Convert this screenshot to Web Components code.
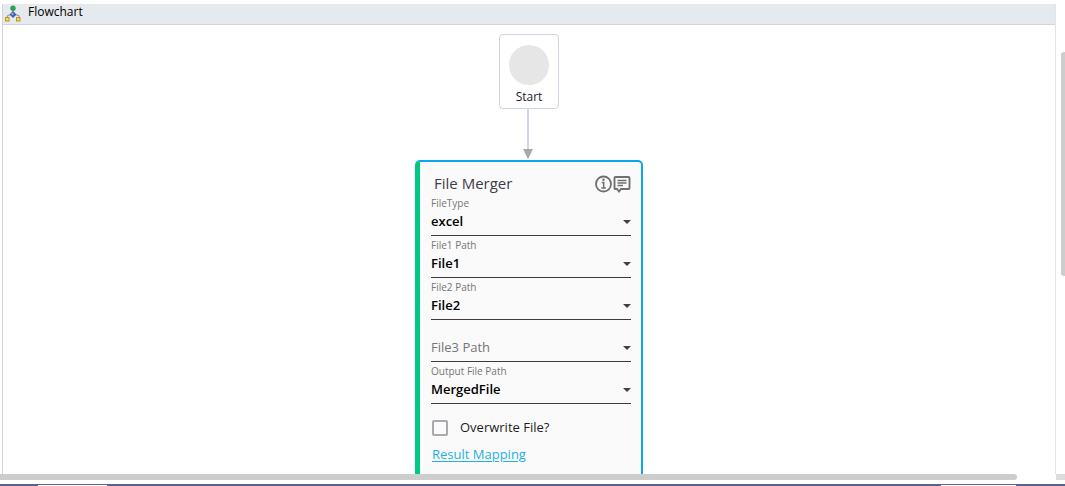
<!DOCTYPE html>
<html lang="en">
<head>
<meta charset="utf-8">
<title>Flowchart</title>
<style>
  html, body { margin: 0; height: 100%; background: #fff; overflow: hidden; }
  body { font-family: "Open Sans", "Noto Sans", sans-serif; color: #1e1e1e; }
</style>
</head>
<body>
<designer-shell>
  <flow-panel heading="Flowchart">
    <start-node>Start</start-node>
    <flow-arrow></flow-arrow>
    <activity-card heading="File Merger">
      <select-field label="FileType" value="excel"></select-field>
      <select-field label="File1 Path" value="File1"></select-field>
      <select-field label="File2 Path" value="File2"></select-field>
      <select-field label="File3 Path"></select-field>
      <select-field label="Output File Path" value="MergedFile"></select-field>
      <check-field>Overwrite File?</check-field>
      <text-link>Result Mapping</text-link>
    </activity-card>
  </flow-panel>
</designer-shell>
<script>
  function define(name, render) {
    customElements.define(name, class extends HTMLElement {
      constructor() {
        super();
        this.attachShadow({ mode: "open" });
      }
      connectedCallback() {
        this.shadowRoot.innerHTML = render(this);
      }
    });
  }

  define("designer-shell", () => `
    <style>
      :host { display: flex; flex-direction: column; height: 100vh; box-sizing: border-box; padding-top: 4px; }
      .work { flex: 1; min-height: 0; display: grid; grid-template-columns: minmax(0, 1fr) 9px; }
      .gutter { display: grid; grid-template-rows: 48fr 224fr 198fr; padding-left: 5px; }
      .gutter i { grid-row: 2; background: #cdcdcd; border-radius: 3px 0 0 3px; }
      .bar { height: 6px; display: grid; grid-template-columns: 1017fr 39fr 9px; }
      .bar .thumb { background: #cdcdcd; border-radius: 0 3px 3px 0; }
      .bar .corner { grid-column: 3; background: #dcdcdc; }
      .strip { height: 2px; margin-top: 4px; background: #55658f; display: grid; grid-template-columns: 38fr 69fr 834fr 75fr 49fr; }
      .strip i { grid-column: 2; grid-row: 1; margin-top: 1px; background: #fff; }
      .strip i + i { grid-column: 4; }
    </style>
    <div class="work"><slot></slot><div class="gutter"><i></i></div></div>
    <div class="bar"><div class="thumb"></div><div class="corner"></div></div>
    <div class="strip"><i></i><i></i></div>`);

  define("flow-panel", el => `
    <style>
      :host { display: flex; flex-direction: column; min-height: 0; overflow: hidden; margin-left: 2px; border-left: 1px solid #ced4e3; border-right: 1px solid #dfe5ec; }
      header { display: flex; align-items: flex-start; gap: 6px; height: 20px; padding-left: 2px; background: #e7eaed; border-bottom: 1px solid #ced4e3; }
      h1 { margin: 0; font-size: 12px; line-height: 16px; font-weight: 400; color: #000; }
      svg { width: 17px; height: 17px; margin-top: 1px; }
      main { flex: 1; min-height: 0; overflow: hidden; display: flex; flex-direction: column; align-items: center; padding-top: 9px; }
    </style>
    <header>
      <svg viewBox="0 0 17 17" aria-hidden="true">
        <path d="M8 4v5M2.500 13v-2.500L7 9.500h2l5 1V13" fill="none" stroke="#8494a9"/>
        <circle cx="8" cy="3.300" r="2.700" fill="#2f9e52"/>
        <path d="M8 6l3.500 3.500L8 13 4.500 9.500z" fill="#405f9d"/>
        <circle cx="7.500" cy="9" r="1.200" fill="#8aa9df"/>
        <rect x=".5" y="12.500" width="3.500" height="3.500" fill="#f7d86c" stroke="#bd9324"/>
        <rect x="11.500" y="12.500" width="3.500" height="3.500" fill="#f7d86c" stroke="#bd9324"/>
      </svg>
      <h1>${el.getAttribute("heading")}</h1>
    </header>
    <main><slot></slot></main>`);

  define("start-node", () => `
    <style>
      :host { flex: none; display: flex; flex-direction: column; align-items: center; box-sizing: border-box; width: 60px; height: 75px; padding-top: 10px; gap: 4px; border: 1px solid #ced4e3; border-radius: 4px; background: #fff; font-size: 12px; line-height: 16px; color: #1b1b2d; }
      i { width: 40px; height: 40px; border-radius: 50%; background: #e6e6e6; }
    </style>
    <i></i><span><slot></slot></span>`);

  define("flow-arrow", () => `
    <style>
      :host { flex: none; display: block; height: 51px; width: 12px; margin-right: 2px; }
      svg { display: block; }
    </style>
    <svg width="12" height="51" viewBox="0 0 12 51" aria-hidden="true">
      <path d="M6 0v41" stroke="#ced4e3" stroke-width="2"/>
      <path d="M1 40h10L6 50z" fill="#a9a9a9"/>
    </svg>`);

  define("activity-card", el => `
    <style>
      :host { flex: none; display: block; box-sizing: border-box; width: 228px; padding: 12px 10px 16px 11px; background: #fafafa; border: solid #0ba7ec; border-width: 2px 2px 2px 5px; border-left-color: #00c986; border-radius: 5px; }
      header { display: flex; align-items: center; height: 20px; padding-left: 3px; }
      h2 { flex: 1; margin: 0; padding-bottom: 2px; font-size: 15px; line-height: 20px; font-weight: 400; color: #3d3d46; }
      button { display: block; padding: 0; border: 0; background: none; height: 18px; }
      svg { display: block; }
    </style>
    <header>
      <h2>${el.getAttribute("heading")}</h2>
      <button type="button" aria-label="Information">
        <svg width="18" height="18" viewBox="0 0 18 18" fill="none" stroke="#707070">
          <circle cx="8.500" cy="9" r="7.500" stroke-width="1.800"/>
          <path d="M6.700 7.500h2v5M6.300 13h4.600" stroke-width="1.500"/>
          <circle cx="8.500" cy="4.800" r="1.200" fill="#707070" stroke="none"/>
        </svg>
      </button>
      <button type="button" aria-label="Comment">
        <svg width="18" height="18" viewBox="0 0 18 18" fill="none" stroke="#707070">
          <path d="M2.500 2h13q1 0 1 1v10q0 1-1 1H8l-2 2.500L4 14H2.500q-1 0-1-1V3q0-1 1-1z" stroke-width="1.900"/>
          <path d="M4.500 5.500h9M4.500 8h9M4.500 10.500h5.500" stroke-width="1.400"/>
        </svg>
      </button>
    </header>
    <slot></slot>`);

  define("select-field", el => {
    const label = el.getAttribute("label");
    const value = el.getAttribute("value");
    return `
    <style>
      :host { display: block; }
      .field { display: grid; grid-template: 16px 25px / 1fr 8px; border-bottom: 1px solid #3c3c3c; }
      label { grid-area: 1 / 1 / 2 / 3; font-size: 10px; line-height: 16px; color: #767676; padding-top: 1px; }
      select { grid-area: 2 / 1 / 3 / 3; appearance: none; border: 0; border-radius: 0; margin: 0; padding: 0 12px 4px 0; background: none; font: 600 13px/20px "Open Sans", "Noto Sans", sans-serif; color: #000; outline: 0; }
      select.empty { color: #767676; font-weight: 400; }
      svg { grid-area: 2 / 2; margin-top: 10px; pointer-events: none; }
    </style>
    <div class="field">
      ${value ? `<label for="s">${label}</label>` : ""}
      <select id="s" ${value ? "" : `class="empty" aria-label="${label}"`}><option>${value || label}</option></select>
      <svg width="8" height="4" viewBox="0 0 8 4" aria-hidden="true"><path d="M0 0h8L4 4z" fill="#404040"/></svg>
    </div>`;
  });

  define("check-field", () => `
    <style>
      :host { display: block; padding-top: 14px; }
      label { display: flex; align-items: center; gap: 12px; height: 20px; padding-left: 1px; font-size: 13px; line-height: 20px; color: #1e1e1e; font-weight: 500; }
      input { appearance: none; box-sizing: border-box; width: 16px; height: 16px; margin: 0; border: 2px solid #a9a9ad; border-radius: 2px; background: #fafafa; }
      span { padding-bottom: 2px; }
    </style>
    <label><input type="checkbox"><span><slot></slot></span></label>`);

  define("text-link", () => `
    <style>
      :host { display: block; padding: 6px 0 0 1px; font-size: 13px; line-height: 20px; }
      a { color: #1fb0e6; text-decoration: underline; text-underline-offset: 2px; }
    </style>
    <a href="#mapping"><slot></slot></a>`);
</script>
</body>
</html>
